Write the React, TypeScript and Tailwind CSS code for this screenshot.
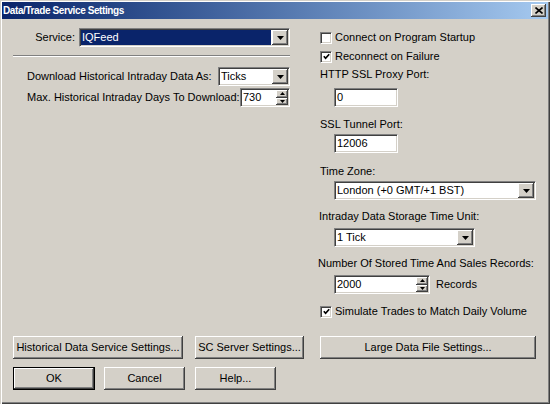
import type { FC, ReactNode } from 'react';

const font = "font-['Liberation_Sans',Arial,sans-serif]";
const sunken =
  'bg-white border border-t-[#808080] border-l-[#808080] border-b-white border-r-white shadow-[inset_1px_1px_0_#404040,inset_-1px_-1px_0_#d4d0c8]';
const raised =
  'bg-[#d4d0c8] shadow-[inset_-1px_-1px_0_#404040,inset_1px_1px_0_#ffffff,inset_-2px_-2px_0_#808080,inset_2px_2px_0_#d4d0c8]';

const Arrow: FC<{ up?: boolean; small?: boolean }> = ({ up, small }) => (
  <svg width={small ? 5 : 7} height={small ? 3 : 4} viewBox={small ? '0 0 5 3' : '0 0 7 4'}>
    {small ? (
      <polygon points={up ? '0,3 5,3 2.5,0' : '0,0 5,0 2.5,3'} fill="#000" />
    ) : (
      <polygon points={up ? '0,4 7,4 3.5,0' : '0,0 7,0 3.5,4'} fill="#000" />
    )}
  </svg>
);

const Select: FC<{ value: string; width: string; selected?: boolean }> = ({ value, width, selected }) => (
  <div className={`${sunken} ${width} h-[19px] flex p-[1px]`}>
    <div
      className={`flex-1 flex items-center pl-[1px] mr-[1px] ${
        selected ? 'bg-[#0a246a] text-white' : 'text-black'
      }`}
    >
      {value}
    </div>
    <div className={`${raised} w-[16px] flex items-center justify-center`}>
      <Arrow />
    </div>
  </div>
);

const Spin: FC<{ value: string; width: string }> = ({ value, width }) => (
  <div className={`${sunken} ${width} h-[19px] flex p-[1px]`}>
    <div className="flex-1 flex items-center pl-[1px]">{value}</div>
    <div className="w-[12px] flex flex-col">
      <div className={`${raised} flex-1 flex items-center justify-center`}>
        <Arrow up small />
      </div>
      <div className={`${raised} flex-1 flex items-center justify-center`}>
        <Arrow small />
      </div>
    </div>
  </div>
);

const TextBox: FC<{ value: string; width: string }> = ({ value, width }) => (
  <div className={`${sunken} ${width} h-[19px] flex items-center pl-[2px]`}>{value}</div>
);

const Check: FC<{ checked?: boolean; label: string; className?: string }> = ({ checked, label, className }) => (
  <div className={`flex items-center h-[13px] ${className ?? ''}`}>
    <div className={`${sunken} w-[12px] h-[12px] ml-[2px] flex items-center justify-center`}>
      {checked && (
        <svg width="7" height="7" viewBox="0 0 7 7">
          <polyline points="0.8,3.2 2.6,5.2 6.2,1.2" fill="none" stroke="#000" strokeWidth="1.7" />
        </svg>
      )}
    </div>
    <span className="ml-[3px]">{label}</span>
  </div>
);

const Button: FC<{ children: ReactNode; width: string; primary?: boolean }> = ({ children, width, primary }) => (
  <div className={`${width} h-[23px] ${primary ? 'border border-black' : ''}`}>
    <div className={`${raised} w-full h-full flex items-center justify-center`}>{children}</div>
  </div>
);

export default function App() {
  return (
    <div
      className={`${font} text-[11px] text-black w-[550px] h-[404px] bg-[#d4d0c8] p-[2px] shadow-[inset_1px_1px_0_#d4d0c8,inset_2px_2px_0_#ffffff,inset_-1px_-1px_0_#404040,inset_-2px_-2px_0_#808080] overflow-hidden`}
    >
      {/* title bar */}
      <div className="h-[17px] bg-gradient-to-r from-[#0a246a] to-[#a6caf0] flex items-center justify-between pl-[1px] pr-[2px]">
        <span className="text-white font-bold text-[10px] tracking-[-0.4px]">Data/Trade Service Settings</span>
        <div className={`${raised} w-[15px] h-[13px] flex items-center justify-center`}>
          <svg width="8" height="7" viewBox="0 0 8 7">
            <path d="M0.5 0.5 L7.5 6.5 M7.5 0.5 L0.5 6.5" stroke="#000" strokeWidth="1.6" />
          </svg>
        </div>
      </div>

      <div className="flex h-[317px]">
        {/* left column */}
        <div className="ml-[11px] w-[277px] flex flex-col">
          <div className="mt-[9px] flex items-center justify-end gap-[4px] h-[19px]">
            <span>Service:</span>
            <Select value="IQFeed" width="w-[211px]" selected />
          </div>
          <div className="mt-[8px] h-[2px] border-t border-t-[#808080] border-b border-b-white" />
          <div className="mt-[10px] flex items-center justify-between pl-[14px] h-[19px]">
            <span>Download Historical Intraday Data As:</span>
            <Select value="Ticks" width="w-[72px]" />
          </div>
          <div className="mt-[2px] flex items-center justify-between pl-[14px] h-[19px]">
            <span>Max. Historical Intraday Days To Download:</span>
            <Spin value="730" width="w-[50px]" />
          </div>
        </div>

        {/* right column */}
        <div className="ml-[28px] w-[218px] flex flex-col">
          <Check label="Connect on Program Startup" className="mt-[12px]" />
          <Check label="Reconnect on Failure" checked className="mt-[6px]" />
          <div className="mt-[5px] h-[13px] pl-[2px] flex items-center">HTTP SSL Proxy Port:</div>
          <div className="mt-[7px] ml-[16px]">
            <TextBox value="0" width="w-[64px]" />
          </div>
          <div className="mt-[11px] h-[13px] pl-[2px] flex items-center">SSL Tunnel Port:</div>
          <div className="mt-[3px] ml-[16px]">
            <TextBox value="12006" width="w-[64px]" />
          </div>
          <div className="mt-[12px] h-[13px] pl-[2px] flex items-center">Time Zone:</div>
          <div className="mt-[3px] ml-[16px]">
            <Select value="London (+0 GMT/+1 BST)" width="w-[202px]" />
          </div>
          <div className="mt-[10px] h-[13px] pl-[1px] flex items-center">Intraday Data Storage Time Unit:</div>
          <div className="mt-[5px] ml-[16px]">
            <Select value="1 Tick" width="w-[141px]" />
          </div>
          <div className="mt-[10px] h-[13px] flex items-center">Number Of Stored Time And Sales Records:</div>
          <div className="mt-[5px] ml-[16px] flex items-center gap-[6px]">
            <Spin value="2000" width="w-[96px]" />
            <span>Records</span>
          </div>
          <Check label="Simulate Trades to Match Daily Volume" checked className="mt-[11px]" />
        </div>
      </div>

      {/* buttons */}
      <div className="flex ml-[11px]">
        <Button width="w-[170px]">Historical Data Service Settings...</Button>
        <div className="ml-[12px]">
          <Button width="w-[109px]">SC Server Settings...</Button>
        </div>
        <div className="ml-[16px]">
          <Button width="w-[216px]">Large Data File Settings...</Button>
        </div>
      </div>
      <div className="flex ml-[11px] mt-[8px]">
        <Button width="w-[82px]" primary>
          OK
        </Button>
        <div className="ml-[9px]">
          <Button width="w-[81px]">Cancel</Button>
        </div>
        <div className="ml-[10px]">
          <Button width="w-[81px]">Help...</Button>
        </div>
      </div>
    </div>
  );
}
